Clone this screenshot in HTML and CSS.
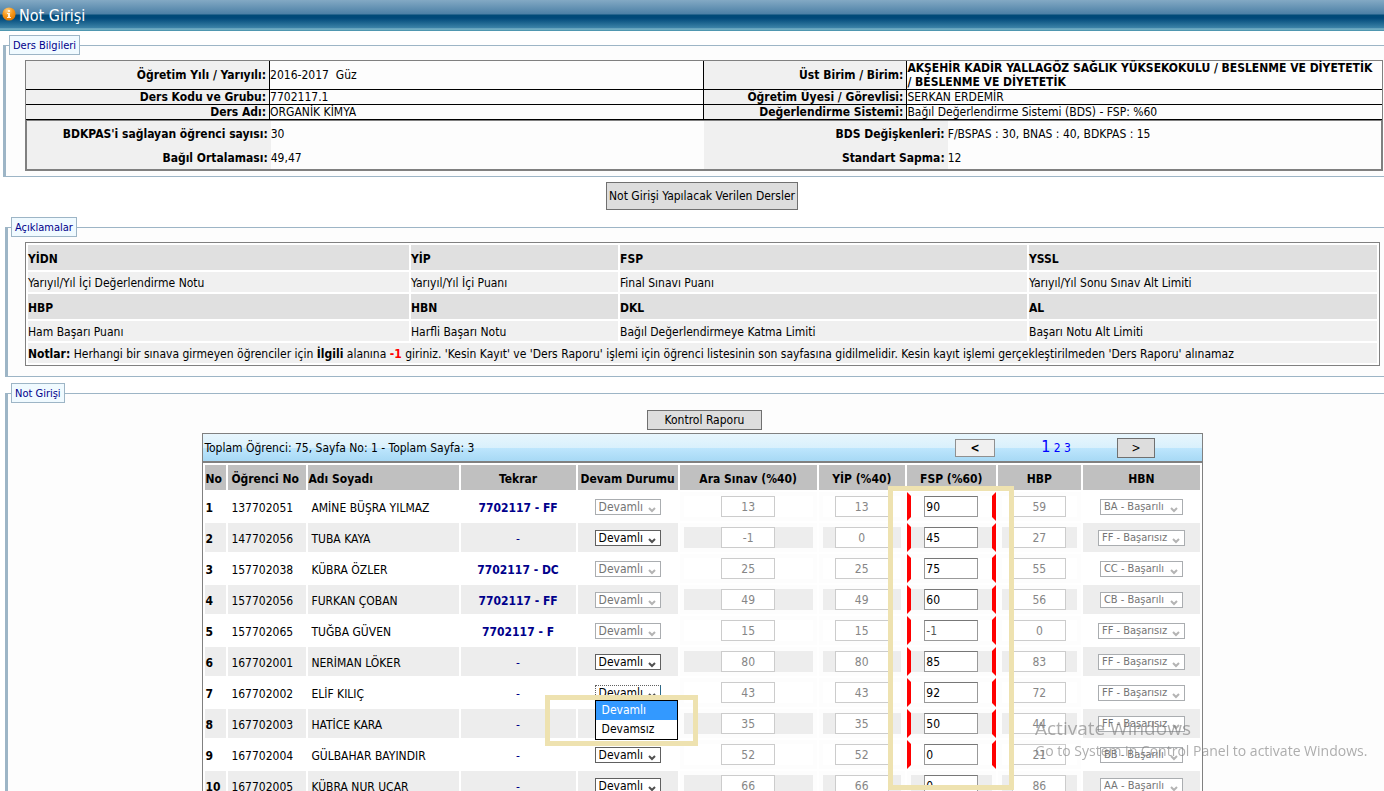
FILE: index.html
```html
<!DOCTYPE html>
<html lang="tr">
<head>
<meta charset="utf-8">
<title>Not Girişi</title>
<link rel="stylesheet" href="styles.css">
</head>
<body>
<header class="titlebar">
  <svg class="info" viewBox="0 0 14 14" aria-hidden="true">
    <defs><radialGradient id="orb" cx="40%" cy="25%" r="75%"><stop offset="0" stop-color="#ffd28a"/><stop offset=".5" stop-color="#f79a1c"/><stop offset="1" stop-color="#e07800"/></radialGradient></defs>
    <circle cx="7" cy="7" r="6.6" fill="url(#orb)"/>
    <path d="M6 3h2v2H6zM5 6h3v4h1v1H5v-1h1V7H5z" fill="#fff3dc"/>
  </svg>
  <h1>Not Girişi</h1>
</header>

<fieldset class="panel course">
  <legend>Ders Bilgileri</legend>
  <table class="facts">
    <colgroup><col class="w18"><col class="w32"><col class="w15"><col class="w35"></colgroup>
    <tr><th>Öğretim Yılı / Yarıyılı:</th><td>2016-2017 &nbsp;Güz</td><th>Üst Birim / Birim:</th><td><b>AKŞEHİR KADİR YALLAGÖZ SAĞLIK YÜKSEKOKULU / BESLENME VE DİYETETİK /&nbsp;BESLENME VE DİYETETİK</b></td></tr>
    <tr><th>Ders Kodu ve Grubu:</th><td>7702117.1</td><th>Öğretim Üyesi / Görevlisi:</th><td>SERKAN ERDEMİR</td></tr>
    <tr><th>Ders Adı:</th><td>ORGANİK KİMYA</td><th>Değerlendirme Sistemi:</th><td>Bağıl Değerlendirme Sistemi (BDS) - FSP: %60</td></tr>
  </table>
  <table class="stats">
    <colgroup><col class="w18"><col class="w32"><col class="w18"><col class="w32"></colgroup>
    <tr><th>BDKPAS'i sağlayan öğrenci sayısı:</th><td>30</td><th>BDS Değişkenleri:</th><td>F/BSPAS : 30, BNAS : 40, BDKPAS : 15</td></tr>
    <tr><th>Bağıl Ortalaması:</th><td>49,47</td><th>Standart Sapma:</th><td>12</td></tr>
  </table>
</fieldset>

<div class="center"><button type="button" class="btn big">Not Girişi Yapılacak Verilen Dersler</button></div>

<fieldset class="panel inset">
  <legend>Açıklamalar</legend>
  <table class="terms">
    <colgroup><col class="t1"><col class="t2"><col class="t3"><col class="t4"></colgroup>
    <tr><th>YİDN</th><th>YİP</th><th>FSP</th><th>YSSL</th></tr>
    <tr><td>Yarıyıl/Yıl İçi Değerlendirme Notu</td><td>Yarıyıl/Yıl İçi Puanı</td><td>Final Sınavı Puanı</td><td>Yarıyıl/Yıl Sonu Sınav Alt Limiti</td></tr>
    <tr><th>HBP</th><th>HBN</th><th>DKL</th><th>AL</th></tr>
    <tr><td>Ham Başarı Puanı</td><td>Harfli Başarı Notu</td><td>Bağıl Değerlendirmeye Katma Limiti</td><td>Başarı Notu Alt Limiti</td></tr>
    <tr><td colspan="4"><b>Notlar:</b> Herhangi bir sınava girmeyen öğrenciler için <b>İlgili</b> alanına <b class="red">-1</b> giriniz. 'Kesin Kayıt' ve 'Ders Raporu' işlemi için öğrenci listesinin son sayfasına gidilmelidir. Kesin kayıt işlemi gerçekleştirilmeden 'Ders Raporu' alınamaz</td></tr>
  </table>
</fieldset>

<fieldset class="panel inset entry">
  <legend>Not Girişi</legend>
  <div class="center report"><button type="button" class="btn">Kontrol Raporu</button></div>
  <div class="list">
    <div class="pager">
      <span>Toplam Öğrenci: 75, Sayfa No: 1 - Toplam Sayfa: 3</span>
      <button type="button" class="btn prev" aria-label="Önceki sayfa">&lt;</button>
      <nav><a href="#" class="current">1</a> <a href="#">2</a> <a href="#">3</a></nav>
      <button type="button" class="btn next" aria-label="Sonraki sayfa">&gt;</button>
    </div>
    <table class="grades">
      <colgroup><col class="c1"><col class="c2"><col class="c3"><col class="c4"><col class="c5"><col class="c6"><col class="c7"><col class="c8"><col class="c9"><col class="c10"></colgroup>
      <thead><tr><th class="l">No</th><th class="l wide">Öğrenci No</th><th class="l">Adı Soyadı</th><th>Tekrar</th><th>Devam Durumu</th><th>Ara Sınav (%40)</th><th>YİP (%40)</th><th class="marked">FSP (%60)<span class="mark tall"></span></th><th>HBP</th><th>HBN</th></tr></thead>
      <tbody>
      <tr><th>1</th><td>137702051</td><td>AMİNE BÜŞRA YILMAZ</td><td class="rep"><b>7702117 - FF</b></td><td class="mid"><select disabled aria-label="Devam"><option>Devamlı</option></select></td><td class="num"><input disabled value="13" aria-label="Ara Sınav"></td><td class="num"><input disabled value="13" aria-label="YİP"></td><td class="num fsp"><input value="90" aria-label="FSP"></td><td class="num"><input disabled value="59" aria-label="HBP"></td><td class="mid"><select class="pass" disabled aria-label="HBN"><option>BA - Başarılı</option></select></td></tr>
      <tr><th>2</th><td>147702056</td><td>TUBA KAYA</td><td class="rep">-</td><td class="mid"><select aria-label="Devam"><option>Devamlı</option><option>Devamsız</option></select></td><td class="num"><input disabled value="-1" aria-label="Ara Sınav"></td><td class="num"><input disabled value="0" aria-label="YİP"></td><td class="num fsp"><input value="45" aria-label="FSP"></td><td class="num"><input disabled value="27" aria-label="HBP"></td><td class="mid"><select class="fail" disabled aria-label="HBN"><option>FF - Başarısız</option></select></td></tr>
      <tr><th>3</th><td>157702038</td><td>KÜBRA ÖZLER</td><td class="rep"><b>7702117 - DC</b></td><td class="mid"><select disabled aria-label="Devam"><option>Devamlı</option></select></td><td class="num"><input disabled value="25" aria-label="Ara Sınav"></td><td class="num"><input disabled value="25" aria-label="YİP"></td><td class="num fsp"><input value="75" aria-label="FSP"></td><td class="num"><input disabled value="55" aria-label="HBP"></td><td class="mid"><select class="pass" disabled aria-label="HBN"><option>CC - Başarılı</option></select></td></tr>
      <tr><th>4</th><td>157702056</td><td>FURKAN ÇOBAN</td><td class="rep"><b>7702117 - FF</b></td><td class="mid"><select disabled aria-label="Devam"><option>Devamlı</option></select></td><td class="num"><input disabled value="49" aria-label="Ara Sınav"></td><td class="num"><input disabled value="49" aria-label="YİP"></td><td class="num fsp"><input value="60" aria-label="FSP"></td><td class="num"><input disabled value="56" aria-label="HBP"></td><td class="mid"><select class="pass" disabled aria-label="HBN"><option>CB - Başarılı</option></select></td></tr>
      <tr><th>5</th><td>157702065</td><td>TUĞBA GÜVEN</td><td class="rep"><b>7702117 - F</b></td><td class="mid"><select disabled aria-label="Devam"><option>Devamlı</option></select></td><td class="num"><input disabled value="15" aria-label="Ara Sınav"></td><td class="num"><input disabled value="15" aria-label="YİP"></td><td class="num fsp"><input class="locked" readonly value="-1" aria-label="FSP"></td><td class="num"><input disabled value="0" aria-label="HBP"></td><td class="mid"><select class="fail" disabled aria-label="HBN"><option>FF - Başarısız</option></select></td></tr>
      <tr><th>6</th><td>167702001</td><td>NERİMAN LÖKER</td><td class="rep">-</td><td class="mid"><select aria-label="Devam"><option>Devamlı</option><option>Devamsız</option></select></td><td class="num"><input disabled value="80" aria-label="Ara Sınav"></td><td class="num"><input disabled value="80" aria-label="YİP"></td><td class="num fsp"><input value="85" aria-label="FSP"></td><td class="num"><input disabled value="83" aria-label="HBP"></td><td class="mid"><select class="fail" disabled aria-label="HBN"><option>FF - Başarısız</option></select></td></tr>
      <tr><th>7</th><td>167702002</td><td>ELİF KILIÇ</td><td class="rep">-</td><td class="mid"><div class="dropdown"><select class="open" aria-label="Devam"><option>Devamlı</option><option>Devamsız</option></select><span class="mark menu-mark"></span><ul class="menu" role="listbox"><li role="option" aria-selected="true">Devamlı</li><li role="option">Devamsız</li></ul></div></td><td class="num"><input disabled value="43" aria-label="Ara Sınav"></td><td class="num"><input disabled value="43" aria-label="YİP"></td><td class="num fsp"><input value="92" aria-label="FSP"></td><td class="num"><input disabled value="72" aria-label="HBP"></td><td class="mid"><select class="fail" disabled aria-label="HBN"><option>FF - Başarısız</option></select></td></tr>
      <tr><th>8</th><td>167702003</td><td>HATİCE KARA</td><td class="rep">-</td><td class="mid"><select aria-label="Devam"><option>Devamlı</option><option>Devamsız</option></select></td><td class="num"><input disabled value="35" aria-label="Ara Sınav"></td><td class="num"><input disabled value="35" aria-label="YİP"></td><td class="num fsp"><input value="50" aria-label="FSP"></td><td class="num"><input disabled value="44" aria-label="HBP"></td><td class="mid"><select class="fail" disabled aria-label="HBN"><option>FF - Başarısız</option></select></td></tr>
      <tr><th>9</th><td>167702004</td><td>GÜLBAHAR BAYINDIR</td><td class="rep">-</td><td class="mid"><select aria-label="Devam"><option>Devamlı</option><option>Devamsız</option></select></td><td class="num"><input disabled value="52" aria-label="Ara Sınav"></td><td class="num"><input disabled value="52" aria-label="YİP"></td><td class="num fsp"><input value="0" aria-label="FSP"></td><td class="num"><input disabled value="21" aria-label="HBP"></td><td class="mid"><select class="pass" disabled aria-label="HBN"><option>BB - Başarılı</option></select></td></tr>
      <tr><th>10</th><td>167702005</td><td>KÜBRA NUR UÇAR</td><td class="rep">-</td><td class="mid"><select aria-label="Devam"><option>Devamlı</option><option>Devamsız</option></select></td><td class="num"><input disabled value="66" aria-label="Ara Sınav"></td><td class="num"><input disabled value="66" aria-label="YİP"></td><td class="num fsp plain"><input value="0" aria-label="FSP"></td><td class="num"><input disabled value="86" aria-label="HBP"></td><td class="mid"><select class="pass" disabled aria-label="HBN"><option>AA - Başarılı</option></select></td></tr>
      </tbody>
    </table>
  </div>
</fieldset>

<aside class="watermark"><p class="wm-title">Activate Windows</p><p>Go to System in Control Panel to activate Windows.</p></aside>
</body>
</html>
```
FILE: styles.css
```css
* { box-sizing: border-box; }
body {
  margin: 0;
  height: 100vh;
  overflow: hidden;
  background: #fff;
  color: #000;
  font: 12px/14px "DejaVu Sans Condensed", Tahoma, "DejaVu Sans", sans-serif;
}
button, input, select { font: inherit; color: inherit; }

.titlebar {
  display: flex;
  align-items: center;
  gap: 3px;
  height: 31px;
  padding: 0 2px;
  background: linear-gradient(#83a9c4 0, #4c80a6 14px, #004a77 15px, #00497a 18px, #3d84a8 28px, #8fc3d3 29px, #4f97b0 30px, #4f97b0 31px);
}
.info { width: 14px; height: 14px; margin-bottom: 3px; }
.titlebar h1 {
  margin: 0;
  color: #fff;
  font-size: 16px;
  line-height: 20px;
  font-weight: 400;
}

.panel {
  min-width: 0;
  margin: 4px 0 0 3px;
  padding: 5px 1px 5px 3px;
  border: 1px solid #9db5c6;
  border-left-width: 3px;
  border-right: 0;
  background: #fdfdfd;
}
.inset { margin: 7px 0 0 5px; padding: 5px 6px 10px 3px; }
.entry { margin-top: 6px; padding-top: 7px; }
legend {
  height: 20px;
  padding: 0 3px;
  border: 1px solid #9db5c6;
  background: #f0faff;
  color: #00008b;
  font-size: 11px;
  line-height: 19px;
}

table { table-layout: fixed; border-spacing: 0; }
th, td { padding: 0; }
.facts, .stats { width: calc(100% - 16px); margin-left: 16px; }
.w15 { width: 15%; }
.w18 { width: 18%; }
.w32 { width: 32%; }
.w35 { width: 35%; }
.facts { border: 1px solid #808080; border-bottom: 0; }
.facts th, .facts td {
  height: 15px;
  border-bottom: 1px solid #000;
  border-right: 1px solid #000;
}
.facts td:last-child { border-right: 0; }
.facts th, .stats th { padding-right: 3px; background: #f0f0f0; text-align: right; }
.stats { border: 2px solid #808080; border-top-width: 1px; }
.stats th, .stats td { height: 24px; padding-top: 2px; }

.center { display: flex; justify-content: center; padding-left: 20px; }
.panel + .center { margin-top: 5px; }
.btn {
  height: 20px;
  padding: 0 17px;
  border: 1px solid #707070;
  background: #ddd;
}
.big { height: 28px; padding: 0 2px; }
.report { margin-bottom: 3px; }

.terms {
  width: calc(100% - 16px);
  margin-left: 14px;
  border: 1px solid #808080;
  border-spacing: 2px;
  background: #fff;
}
.terms th, .terms td { padding-top: 2px; }
.terms th { height: 25px; background: #e0e0e0; text-align: left; }
.terms td { height: 20px; background: #f0f0f0; }
.t1 { width: 381px; }
.t2 { width: 207px; }
.t3 { width: 407px; }
.t4 { width: 348px; }
.red { color: #f00; }

.list {
  width: 73.2%;
  margin-left: 14%;
  border: 1px solid #808080;
  background: #fff;
}
.pager {
  display: flex;
  align-items: center;
  height: 29px;
  padding: 0 47px 0 1px;
  border-bottom: 2px solid #808080;
  background: linear-gradient(#e8f6fd 0, #d9f0fc 50%, #bee6fd 51%, #a7d9f5 100%);
}
.pager span { flex: 1; }
.pager nav { width: 122px; text-align: center; }
.pager a { color: #00f; text-decoration: none; }
.pager .current { font-size: 16px; }
.prev { width: 40px; height: 18px; padding: 0; background: #f0f0f0; border-color: #909090; font-weight: 700; }
.next { width: 38px; padding: 0; }

.grades { width: 100%; border-spacing: 2px; }
.c1 { width: 21px; }
.c2 { width: 78px; }
.c3 { width: 150px; }
.c4 { width: 115px; }
.c5 { width: 100px; }
.c6 { width: 137px; }
.c7 { width: 86px; }
.c8 { width: 89px; }
.c9 { width: 83px; }
.c10 { width: 117px; }
.grades thead th { height: 25px; padding-top: 2px; background: #c0c0c0; white-space: nowrap; }
.grades .l { text-align: left; }
.grades .wide { padding-left: 3px; }
.marked { position: relative; }
.grades tbody th, .grades td { height: 29px; padding-top: 2px; text-align: left; white-space: nowrap; }
.grades tbody tr:nth-child(even) > * { background: #ededed; }
.grades td { padding-left: 3px; }
.grades .rep { padding: 2px 0 0; color: #00008b; text-align: center; }
.grades .mid { padding: 0; text-align: center; }
.grades .num { padding: 0; border: 4px solid #fdfdfd; text-align: center; line-height: 0; }
.grades .fsp { border-left-color: #f00; border-right-color: #f00; }
.grades .plain { border-color: #fdfdfd; }

.num input {
  width: 54px;
  height: 21px;
  padding: 0 1px;
  border: 1px solid #999;
  border-top-color: #777;
  background: #fff;
  line-height: 16px;
}
.num input:disabled { border-color: #ccc; color: #868686; text-align: center; }
.num .locked { color: #555; }

select {
  display: block;
  width: 66px;
  height: 16px;
  margin: 0 auto;
  padding: 0 12px 0 3px;
  appearance: none;
  border: 1px solid #606060;
  border-radius: 0;
  background: #fff url("data:image/svg+xml,%3Csvg xmlns='http://www.w3.org/2000/svg' width='8' height='6'%3E%3Cpath d='M1 1l3 3 3-3' fill='none' stroke='%23505050' stroke-width='2'/%3E%3C/svg%3E") no-repeat right 4px top 7px;
}
select:disabled {
  opacity: 1;
  border-color: #aaadb0;
  color: #747474;
  background-image: url("data:image/svg+xml,%3Csvg xmlns='http://www.w3.org/2000/svg' width='8' height='6'%3E%3Cpath d='M1 1l3 3 3-3' fill='none' stroke='%23b4b4b4' stroke-width='2'/%3E%3C/svg%3E");
}
.pass, .fail { width: 83px; font-size: 11px; }
.fail { width: 87px; }
.dropdown { position: relative; width: 66px; margin: 0 auto; }
.open { border-style: dotted; border-right: 1px solid #2a6a8c; }
.menu {
  position: absolute;
  z-index: 3;
  top: 15px;
  left: 0;
  width: 83px;
  margin: 0;
  padding: 0;
  border: 1px solid #000;
  background: #fff;
  list-style: none;
  text-align: left;
}
.menu li { padding-left: 6px; line-height: 19px; }
.menu [aria-selected] { background: #3399ff; color: #fff; }
.mark { position: absolute; z-index: 2; border: 5px solid #eee2b0; pointer-events: none; }
.tall { top: 21px; left: -19px; right: -18px; height: 304px; }
.menu-mark { top: 10px; left: -50px; width: 153px; height: 51px; }

.watermark {
  position: fixed;
  z-index: 4;
  right: 9px;
  bottom: 30px;
  width: 340px;
  color: rgba(120, 120, 120, .6);
  font: 14px/20px "Open Sans", sans-serif;
  white-space: nowrap;
  pointer-events: none;
}
.watermark p { margin: 0; }
.watermark .wm-title { font-size: 19px; line-height: 25px; }
```
